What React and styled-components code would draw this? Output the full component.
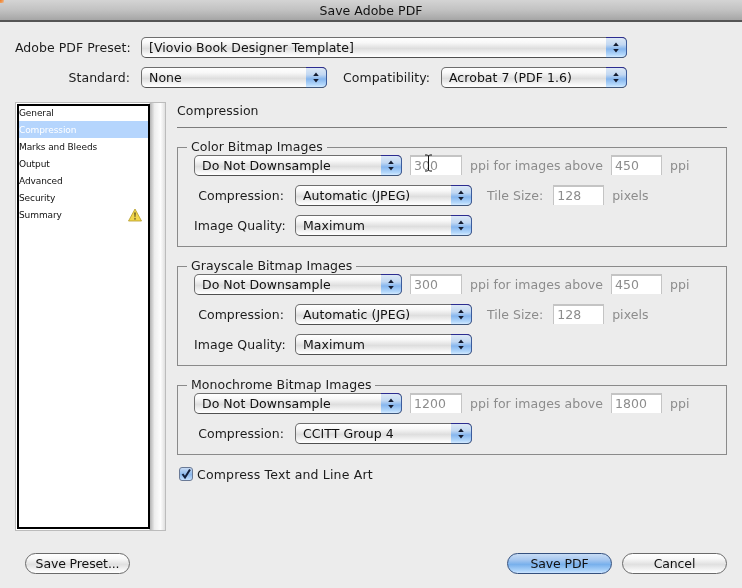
import React from "react";
import styled, { createGlobalStyle } from "styled-components";

const GlobalStyle = createGlobalStyle`
  html, body {
    margin: 0;
    padding: 0;
    background: #ececec;
  }
  body {
    font-family: "DejaVu Sans", "Liberation Sans", sans-serif;
    font-size: 12.5px;
    letter-spacing: 0.04px;
    color: #1c1c1c;
  }
`;

const Dialog = styled.div`
  position: relative;
  width: 742px;
  height: 588px;
  overflow: hidden;
  background: #ececec;
  display: flex;
  flex-direction: column;
  filter: blur(0.3px);
`;

const CornerGlow = styled.div`
  position: absolute;
  left: 0;
  top: 0;
  width: 4px;
  height: 3px;
  background: radial-gradient(circle at 0 0, #f07a20, #f0a060 60%, transparent);
`;

const TitleBar = styled.div`
  height: 20px;
  flex: none;
  display: flex;
  align-items: center;
  justify-content: center;
  background: linear-gradient(#d4d4d4, #c2c2c2 50%, #a6a6a6);
  border-bottom: 2px solid #555;
  font-size: 12.5px;
  color: #111;
`;

const Body = styled.div`
  flex: 1;
  display: flex;
  flex-direction: column;
  padding: 15px 15px 0;
`;

const TopRow = styled.div`
  display: flex;
  align-items: center;
  height: 21px;
  margin-bottom: ${(p) => p.$gap || 0}px;
`;

const Label = styled.div`
  width: ${(p) => p.$width}px;
  flex: none;
  margin-left: ${(p) => p.$left || 0}px;
  margin-right: 11px;
  text-align: right;
  white-space: nowrap;
`;

const SelectBox = styled.div`
  width: ${(p) => p.$width}px;
  height: 21px;
  box-sizing: border-box;
  flex: none;
  display: flex;
  border: 1px solid #6e6e6e;
  border-bottom-color: #505050;
  border-radius: 5px;
  background: linear-gradient(#fff, #f8f8f8 25%, #dedede 55%, #f6f6f6 85%, #fff);
`;

const SelectValue = styled.div`
  flex: 1;
  padding-left: 7px;
  line-height: 19px;
  white-space: nowrap;
  color: #111;
`;

const Stepper = styled.div`
  width: 20px;
  flex: none;
  margin: -1px -1px -1px 0;
  display: flex;
  align-items: center;
  justify-content: center;
  border-top: 1px solid #2c2c90;
  border-right: 1px solid #3c5c9c;
  border-bottom: 1px solid #40587c;
  border-radius: 0 5px 5px 0;
  background: linear-gradient(#dce8f6, #c2d8f2 35%, #86b6ee 58%, #b4d8fb 88%, #d4eaff);
`;

const Main = styled.div`
  display: flex;
  gap: 11px;
  margin-top: 14px;
  height: 429px;
`;

const Sidebar = styled.div`
  width: 151px;
  flex: none;
  box-sizing: border-box;
  display: flex;
  border: 1px solid #bcbcbc;
  padding: 1px 0;
  background: linear-gradient(90deg, #fff, #fff 89%, #b4b4b4 90%, #eeeeee 93%, #fdfdfd 97%, #e0e0e0);
`;

const List = styled.div`
  width: 133px;
  flex: none;
  box-sizing: border-box;
  margin-left: 1px;
  border: 2px solid #000;
  background: #fff;
  overflow: hidden;
`;

const ItemList = styled.div`
  margin-top: -2px;
`;

const Item = styled.div`
  height: 17px;
  box-sizing: border-box;
  display: flex;
  align-items: center;
  justify-content: space-between;
  padding: 0 6px 0 0;
  font-size: 9px;
  letter-spacing: -0.1px;
  color: ${(p) => (p.$active ? "#fff" : "#111")};
  background: ${(p) => (p.$active ? "#b5d5fd" : "transparent")};
`;

const Panel = styled.div`
  flex: 1;
  min-width: 0;
  display: flex;
  flex-direction: column;
`;

const Heading = styled.div`
  height: 25px;
  line-height: 17px;
  border-bottom: 1px solid #7c7c7c;
  margin-bottom: 11px;
`;

const Group = styled.fieldset`
  margin: 0 0 11px;
  min-width: 0;
  padding: 0 9px 10px 16px;
  border: 1px solid #8a8a8a;
  display: flex;
  flex-direction: column;
  gap: 9px;
`;

const Legend = styled.legend`
  margin-left: -7px;
  padding: 0 4px;
  line-height: 16px;
  height: 16px;
`;

const Row = styled.div`
  display: flex;
  align-items: center;
  height: 21px;
`;

const FieldWrap = styled.div`
  position: relative;
  flex: none;
  align-self: flex-start;
  margin: 0 8px;
`;

const Field = styled.div`
  width: ${(p) => p.$width || 51}px;
  height: 20px;
  box-sizing: border-box;
  padding-left: 3px;
  line-height: 18px;
  background: #fff;
  border-top: 2px solid #c4c4c4;
  border-left: 1px solid #c4c4c4;
  border-right: 1px solid #c4c4c4;
  color: #8c8c8c;
`;

const Muted = styled.span`
  color: #8c8c8c;
  white-space: nowrap;
`;

const TileLabel = styled(Muted)`
  margin-left: 15px;
  margin-right: 2px;
`;

const IBeam = styled.svg`
  position: absolute;
  left: 14px;
  top: -1px;
`;

const CheckRow = styled.div`
  display: flex;
  align-items: center;
  gap: 4px;
  height: 16px;
  margin-left: 2px;
  letter-spacing: 0.17px;
`;

const CheckBox = styled.div`
  width: 14px;
  height: 14px;
  box-sizing: border-box;
  border: 1px solid #6a7a96;
  border-radius: 3px;
  background: linear-gradient(#c6daf4, #8cb8ec 55%, #c4e0ff);
  display: flex;
  align-items: center;
  justify-content: center;
`;

const Footer = styled.div`
  display: flex;
  align-items: center;
  justify-content: space-between;
  margin-top: 22px;
  padding-left: 10px;
`;

const FooterRight = styled.div`
  display: flex;
  gap: 10px;
`;

const Button = styled.div`
  width: 105px;
  height: 21px;
  box-sizing: border-box;
  display: flex;
  align-items: center;
  justify-content: center;
  border-radius: 11px;
  border: 1px solid ${(p) => (p.$primary ? "#34507e" : "#6a6a6a")};
  background: ${(p) =>
    p.$primary
      ? "linear-gradient(#c8dcf4, #a8c8f0 30%, #78b0ec 55%, #aed4fa 88%, #cce4ff)"
      : "linear-gradient(#fff, #f8f8f8 25%, #e0e0e0 55%, #f6f6f6 85%, #fff)"};
  color: #111;
  letter-spacing: -0.12px;
`;

const Arrows = () => (
  <svg width="8" height="13" viewBox="0 0 8 13">
    <path d="M4 1.5 L6.8 5 H1.2 Z M4 11.5 L6.8 8 H1.2 Z" fill="#141c30" />
  </svg>
);

const Select = ({ width, children }) => (
  <SelectBox $width={width}>
    <SelectValue>{children}</SelectValue>
    <Stepper>
      <Arrows />
    </Stepper>
  </SelectBox>
);

const navItems = ["General", "Compression", "Marks and Bleeds", "Output", "Advanced", "Security", "Summary"];

const Warning = () => (
  <svg width="14" height="14" viewBox="0 0 14 14">
    <path d="M7 1 L13.5 13 H0.5 Z" fill="#f2d64a" stroke="#b49a2a" strokeWidth="0.8" strokeLinejoin="round" />
    <path d="M6.4 4.5 H7.6 L7.3 9.3 H6.7 Z M6.4 10.2 H7.6 V11.4 H6.4 Z" fill="#2a2410" />
  </svg>
);

const DownsampleRow = ({ first, second, cursor }) => (
  <Row>
    <Select width={208}>Do Not Downsample</Select>
    <FieldWrap>
      <Field $width={52}>{first}</Field>
      {cursor && (
        <IBeam width="9" height="18" viewBox="0 0 9 18">
          <path d="M1 1 H3.5 L4.5 2 L5.5 1 H8 M4.5 2 V16 M1 17 H3.5 L4.5 16 L5.5 17 H8" fill="none" stroke="#111" strokeWidth="1" />
        </IBeam>
      )}
    </FieldWrap>
    <Muted>ppi for images above</Muted>
    <FieldWrap>
      <Field>{second}</Field>
    </FieldWrap>
    <Muted>ppi</Muted>
  </Row>
);

const CompressionRow = ({ value, tile }) => (
  <Row>
    <Label $width={90}>Compression:</Label>
    <Select width={177}>{value}</Select>
    {tile && (
      <>
        <TileLabel>Tile Size:</TileLabel>
        <FieldWrap>
          <Field>128</Field>
        </FieldWrap>
        <Muted>pixels</Muted>
      </>
    )}
  </Row>
);

const QualityRow = () => (
  <Row>
    <Label $width={90}>Image Quality:</Label>
    <Select width={177}>Maximum</Select>
  </Row>
);

export default function App() {
  return (
    <Dialog>
      <GlobalStyle />
      <TitleBar>Save Adobe PDF</TitleBar>
      <CornerGlow />
      <Body>
        <TopRow $gap={9}>
          <Label $width={115}>Adobe PDF Preset:</Label>
          <Select width={486}>[Viovio Book Designer Template]</Select>
        </TopRow>
        <TopRow>
          <Label $width={115}>Standard:</Label>
          <Select width={186}>None</Select>
          <Label $width={88} $left={15}>Compatibility:</Label>
          <Select width={186}>Acrobat 7 (PDF 1.6)</Select>
        </TopRow>
        <Main>
          <Sidebar>
            <List>
              <ItemList>
                {navItems.map((name) => (
                  <Item key={name} $active={name === "Compression"}>
                    {name}
                    {name === "Summary" && <Warning />}
                  </Item>
                ))}
              </ItemList>
            </List>
          </Sidebar>
          <Panel>
            <Heading>Compression</Heading>
            <Group>
              <Legend>Color Bitmap Images</Legend>
              <DownsampleRow first="300" second="450" cursor />
              <CompressionRow value="Automatic (JPEG)" tile />
              <QualityRow />
            </Group>
            <Group>
              <Legend>Grayscale Bitmap Images</Legend>
              <DownsampleRow first="300" second="450" />
              <CompressionRow value="Automatic (JPEG)" tile />
              <QualityRow />
            </Group>
            <Group>
              <Legend>Monochrome Bitmap Images</Legend>
              <DownsampleRow first="1200" second="1800" />
              <CompressionRow value="CCITT Group 4" />
            </Group>
            <CheckRow>
              <CheckBox>
                <svg width="12" height="12" viewBox="0 0 12 12">
                  <path d="M2.5 6 L5 9.5 L10 1.5" fill="none" stroke="#14203c" strokeWidth="2" />
                </svg>
              </CheckBox>
              Compress Text and Line Art
            </CheckRow>
          </Panel>
        </Main>
        <Footer>
          <Button>Save Preset...</Button>
          <FooterRight>
            <Button $primary>Save PDF</Button>
            <Button>Cancel</Button>
          </FooterRight>
        </Footer>
      </Body>
    </Dialog>
  );
}
